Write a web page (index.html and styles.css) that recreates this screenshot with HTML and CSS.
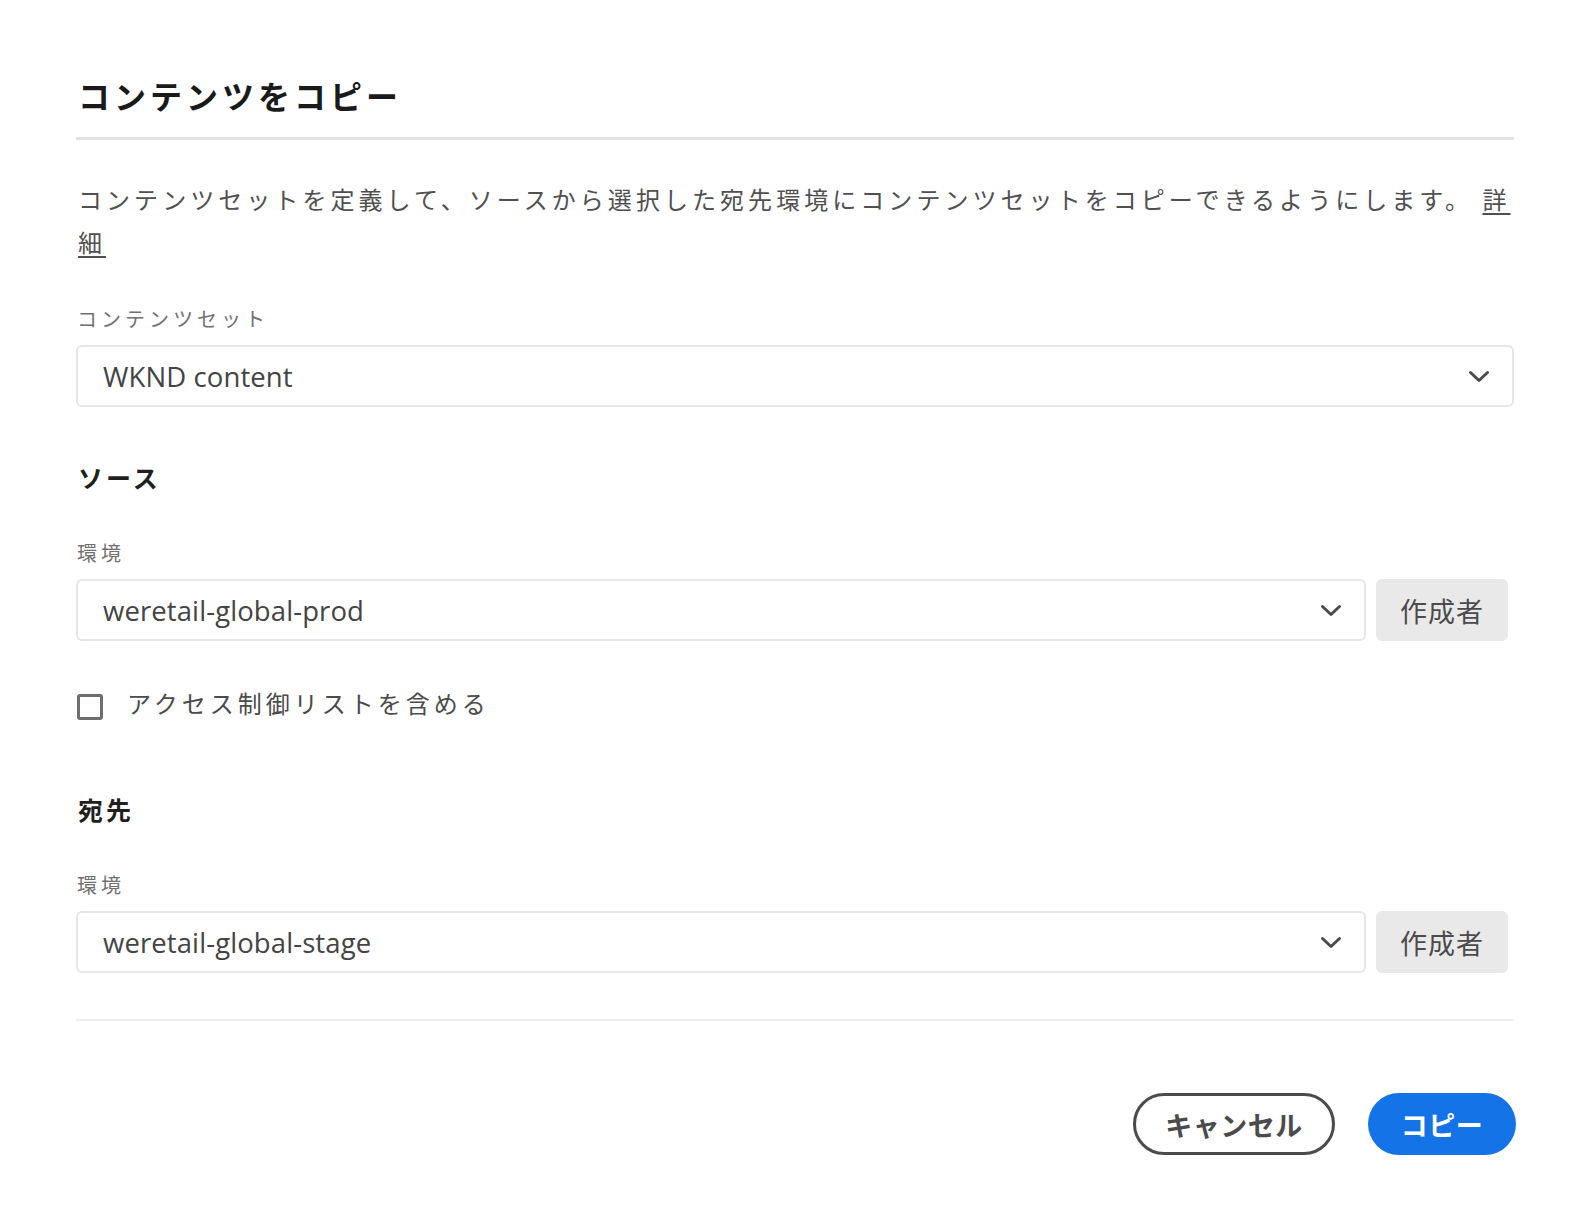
FILE: index.html
```html
<!DOCTYPE html>
<html lang="ja">
<head>
<meta charset="utf-8">
<title>コンテンツをコピー</title>
<link rel="stylesheet" href="styles.css">
</head>
<body>
<div class="dialog">
  <header class="dialog-header">
    <h1 class="title">コンテンツをコピー</h1>
  </header>
  <p class="desc">コンテンツセットを定義して、ソースから選択した宛先環境にコンテンツセットをコピーできるようにします。 <a class="link" href="#">詳<br>細</a></p>

  <div class="field-label first">コンテンツセット</div>
  <div class="select full">
    <span class="select-value">WKND content</span>
    <svg class="chev" width="22" height="13" viewBox="0 0 22 13"><path d="M2.5 2.5 L11 10.5 L19.5 2.5" fill="none" stroke="#4b4b4b" stroke-width="3" stroke-linecap="round" stroke-linejoin="round"/></svg>
  </div>

  <h2 class="section">ソース</h2>
  <div class="field-label">環境</div>
  <div class="env-row">
    <div class="select grow">
      <span class="select-value">weretail-global-prod</span>
      <svg class="chev" width="22" height="13" viewBox="0 0 22 13"><path d="M2.5 2.5 L11 10.5 L19.5 2.5" fill="none" stroke="#4b4b4b" stroke-width="3" stroke-linecap="round" stroke-linejoin="round"/></svg>
    </div>
    <button class="author">作成者</button>
  </div>

  <label class="check-row">
    <span class="checkbox"></span>
    <span class="check-label">アクセス制御リストを含める</span>
  </label>

  <h2 class="section dest">宛先</h2>
  <div class="field-label">環境</div>
  <div class="env-row">
    <div class="select grow">
      <span class="select-value">weretail-global-stage</span>
      <svg class="chev" width="22" height="13" viewBox="0 0 22 13"><path d="M2.5 2.5 L11 10.5 L19.5 2.5" fill="none" stroke="#4b4b4b" stroke-width="3" stroke-linecap="round" stroke-linejoin="round"/></svg>
    </div>
    <button class="author">作成者</button>
  </div>

  <div class="footer-rule"></div>
  <div class="footer">
    <button class="btn btn-cancel">キャンセル</button>
    <button class="btn btn-primary">コピー</button>
  </div>
</div>
</body>
</html>
```

FILE: styles.css
```css
html, body {
  margin: 0;
  padding: 0;
  background: #ffffff;
}

body {
  font-family: "Noto Sans CJK JP", "Noto Sans", sans-serif;
  color: #4b4b4b;
}

.dialog {
  width: 1438px;
  margin-left: 76px;
  padding-top: 75px;
}

.dialog-header {
  padding-bottom: 22px;
  border-bottom: 3px solid #e3e3e3;
}

.title {
  margin: 0 0 0 2px;
  font-size: 32px;
  line-height: 40px;
  font-weight: 700;
  letter-spacing: 4px;
  color: #1a1a1a;
}

.desc {
  margin: 37px 0 0 2px;
  font-size: 24px;
  line-height: 43px;
  letter-spacing: 4.05px;
  color: #505050;
  white-space: nowrap;
}

.link {
  color: #505050;
  text-decoration: underline;
  text-underline-offset: 4px;
}

.field-label {
  margin: 46px 0 0 1px;
  font-size: 20px;
  line-height: 26px;
  letter-spacing: 4px;
  color: #707070;
}

.field-label.first {
  margin-top: 43px;
}

.select {
  box-sizing: border-box;
  height: 62px;
  margin-top: 13px;
  border: 2px solid #e6e6e6;
  border-radius: 6px;
  display: flex;
  align-items: center;
  justify-content: space-between;
  padding: 0 22px 0 25px;
  background: #fff;
}

.select-value {
  font-family: "Open Sans", "Noto Sans", sans-serif;
  font-size: 27.5px;
  color: #444444;
  letter-spacing: 0.1px;
}

.chev {
  display: block;
}

.section {
  margin: 53px 0 0 2px;
  font-size: 25px;
  line-height: 34px;
  font-weight: 700;
  letter-spacing: 3px;
  color: #1f1f1f;
}

.section.dest {
  margin-top: 72px;
}

.env-row {
  width: 1432px;
  display: flex;
  align-items: stretch;
  gap: 10px;
  margin-top: 13px;
}

.env-row .select {
  margin-top: 0;
}

.grow {
  flex: 1;
}

.author {
  width: 132px;
  height: 62px;
  border: none;
  border-radius: 6px;
  background: #e9e9e9;
  font-family: "Noto Sans CJK JP", sans-serif;
  font-size: 27px;
  letter-spacing: 1px;
  color: #4b4b4b;
  padding: 0;
}

.check-row {
  display: flex;
  align-items: center;
  gap: 24px;
  margin-top: 45px;
  height: 34px;
  padding-left: 1px;
}

.checkbox {
  box-sizing: border-box;
  width: 26px;
  height: 26px;
  border: 3px solid #6e6e6e;
  border-radius: 3px;
  margin-top: 8px;
}

.check-label {
  font-size: 24px;
  line-height: 34px;
  letter-spacing: 4px;
  color: #4b4b4b;
}

.footer-rule {
  margin-top: 46px;
  border-top: 2px solid #efefef;
}

.footer {
  display: flex;
  justify-content: flex-end;
  gap: 33px;
  margin-top: 72px;
}

.btn {
  box-sizing: border-box;
  height: 62px;
  border-radius: 31px;
  font-family: "Noto Sans CJK JP", sans-serif;
  font-size: 27px;
  font-weight: 700;
  letter-spacing: 0.5px;
  padding: 0;
}

.btn-cancel {
  width: 202px;
  border: 3px solid #4b4b4b;
  background: #fff;
  color: #4b4b4b;
}

.btn-primary {
  width: 148px;
  border: none;
  background: #1473e6;
  color: #fff;
  margin-right: -2px;
}
```
